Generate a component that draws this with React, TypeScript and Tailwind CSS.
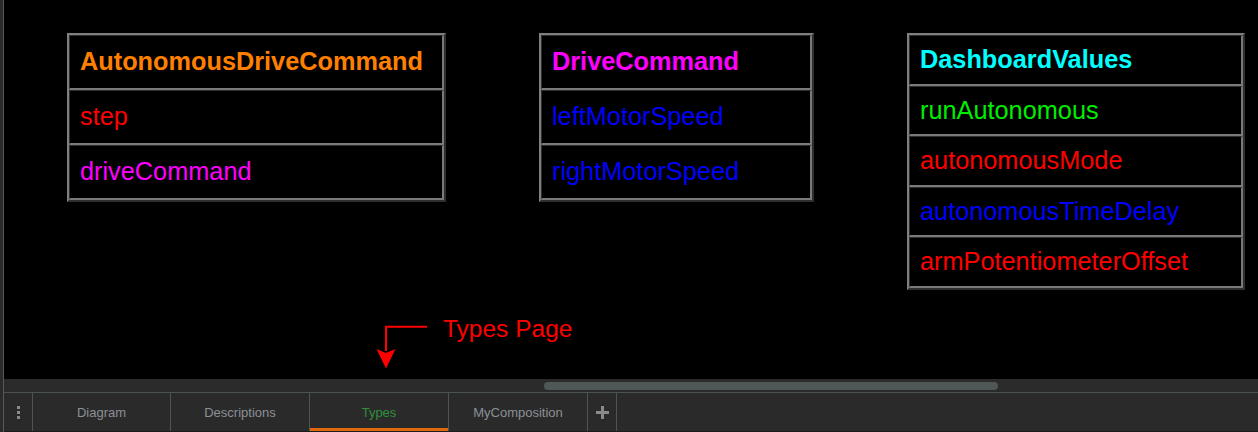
import React from "react";

type Row = { text: string; color: string; h: number };
type Node = { left: number; top: number; width: number; title: string; titleColor: string; titleH: number; rows: Row[] };

const nodes: Node[] = [
  {
    left: 63,
    top: 33,
    width: 379,
    title: "AutonomousDriveCommand",
    titleColor: "#ff8000",
    titleH: 55,
    rows: [
      { text: "step", color: "#ff0000", h: 55 },
      { text: "driveCommand", color: "#ff00ff", h: 55 },
    ],
  },
  {
    left: 535,
    top: 33,
    width: 275,
    title: "DriveCommand",
    titleColor: "#ff00ff",
    titleH: 55,
    rows: [
      { text: "leftMotorSpeed", color: "#0000ff", h: 55 },
      { text: "rightMotorSpeed", color: "#0000ff", h: 55 },
    ],
  },
  {
    left: 903,
    top: 33,
    width: 338,
    title: "DashboardValues",
    titleColor: "#00ffff",
    titleH: 51,
    rows: [
      { text: "runAutonomous", color: "#00ee00", h: 50 },
      { text: "autonomousMode", color: "#ff0000", h: 51 },
      { text: "autonomousTimeDelay", color: "#0000ff", h: 50 },
      { text: "armPotentiometerOffset", color: "#ff0000", h: 51 },
    ],
  },
];

function Cell({ text, color, h, bold }: { text: string; color: string; h: number; bold?: boolean }) {
  return (
    <div
      className={`flex items-center pl-[10px] border-t border-l border-t-[#2e2e2e] border-l-[#2e2e2e] border-b-2 border-r-2 border-b-[#7a7a7a] border-r-[#7a7a7a] text-[25.3px] leading-none ${bold ? "font-bold" : ""}`}
      style={{ height: h, color }}
    >
      {text}
    </div>
  );
}

function TypeNode({ node }: { node: Node }) {
  return (
    <div
      className="absolute flex flex-col border-2 border-t-[#7f7f7f] border-l-[#7f7f7f] border-b-[#2f2f2f] border-r-[#2f2f2f] bg-black"
      style={{ left: node.left, top: node.top, width: node.width }}
    >
      <Cell text={node.title} color={node.titleColor} h={node.titleH} bold />
      {node.rows.map((r) => (
        <Cell key={r.text} text={r.text} color={r.color} h={r.h} />
      ))}
    </div>
  );
}

const tabs = [
  { t: "Diagram", w: 138 },
  { t: "Descriptions", w: 139 },
  { t: "Types", w: 139 },
  { t: "MyComposition", w: 139 },
];

export default function App() {
  return (
    <div
      className="flex h-[432px] w-[1258px] overflow-hidden bg-black"
      style={{ fontFamily: '"Liberation Sans", Arial, sans-serif' }}
    >
      <div className="w-[3px] shrink-0 bg-[#2b2b2b]" />
      <div className="w-px shrink-0 bg-[#575757]" />
      <div className="flex min-w-0 flex-1 flex-col">
        {/* canvas */}
        <div className="relative h-[379px] shrink-0 bg-black">
          {nodes.map((n) => (
            <TypeNode key={n.title} node={n} />
          ))}
          <svg className="absolute left-[366px] top-[318px]" width="64" height="54" viewBox="366 318 64 54">
            <path d="M423 326.7 H382 V351" stroke="#ff0000" strokeWidth="2" fill="none" />
            <polygon points="372.5,349 382,353 391.5,349 382,368.5" fill="#ff0000" />
          </svg>
          <div className="absolute left-[439px] top-[315px] text-[24.5px] leading-[28px] text-[#ff0000]">Types Page</div>
        </div>
        {/* horizontal scrollbar */}
        <div className="relative h-[13px] shrink-0 bg-[#2b2b2b]">
          <div className="absolute left-[540px] top-[3px] h-[8px] w-[454px] rounded-full bg-[#4f5757]" />
        </div>
        <div className="h-px shrink-0 bg-[#4b5252]" />
        {/* tab bar */}
        <div className="flex h-[38px] shrink-0 bg-[#2a2a2a] text-[13px]">
          <div className="flex w-[29px] flex-col items-center justify-center gap-[2px] border-r border-r-[#4f5555] pt-[1px]">
            <span className="block h-[3px] w-[3px] bg-[#8a8a8a]" />
            <span className="block h-[3px] w-[3px] bg-[#8a8a8a]" />
            <span className="block h-[3px] w-[3px] bg-[#8a8a8a]" />
          </div>
          {tabs.map(({ t, w }) => {
            const active = t === "Types";
            return (
              <div
                key={t}
                className={`relative flex items-center justify-center border-r border-r-[#4f5555] pt-[2px] ${active ? "text-[#2f8f3c]" : "text-[#8b9096]"}`}
                style={{ width: w }}
              >
                {t}
                {active && <div className="absolute bottom-0 left-0 right-0 h-[3px] bg-[#e0690f]" />}
              </div>
            );
          })}
          <div className="flex w-[29px] items-center justify-center border-r border-r-[#4f5555]">
            <svg width="13" height="13" viewBox="0 0 13 13">
              <rect x="5" y="0" width="3" height="13" fill="#8a8a8a" />
              <rect x="0" y="5" width="13" height="3" fill="#8a8a8a" />
            </svg>
          </div>
        </div>
        <div className="h-px shrink-0 bg-[#1c1c1c]" />
      </div>
    </div>
  );
}
